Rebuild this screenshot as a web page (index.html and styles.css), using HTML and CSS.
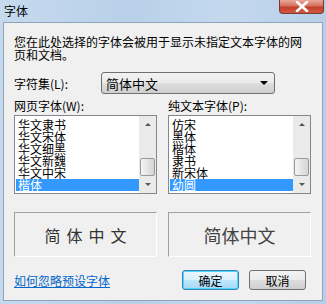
FILE: index.html
```html
<!DOCTYPE html>
<html>
<head>
  <title>字体</title>
  <link rel="stylesheet" href="styles.css">
</head>
<body>
  <div class="window">
    <div class="titlebar">
      <span class="title">字体</span>
      <span class="close">
        <svg width="14" height="11" viewBox="0 0 14 11"><path d="M2 1 L12 10 M12 1 L2 10" stroke="#fff" stroke-width="2.6" stroke-linecap="round"/></svg>
      </span>
    </div>

    <div class="client">
      <p class="intro">您在此处选择的字体会被用于显示未指定文本字体的网页和文档。</p>

      <div class="charset">
        <label>字符集(L):</label>
        <div class="select">
          <span>简体中文</span>
          <span class="arrow"></span>
        </div>
      </div>

      <div class="columns">
        <div class="col">
          <div class="col-label">网页字体(W):</div>
          <div class="listbox">
            <ul class="items">
              <li>华文隶书</li>
              <li>华文宋体</li>
              <li>华文细黑</li>
              <li>华文新魏</li>
              <li>华文中宋</li>
              <li class="selected">楷体</li>
            </ul>
            <div class="scrollbar">
              <span class="up"></span>
              <span class="track"><span class="thumb"></span></span>
              <span class="down"></span>
            </div>
          </div>
          <div class="preview serif">简体中文</div>
        </div>

        <div class="col">
          <div class="col-label">纯文本字体(P):</div>
          <div class="listbox">
            <ul class="items">
              <li>仿宋</li>
              <li>黑体</li>
              <li>楷体</li>
              <li>隶书</li>
              <li>新宋体</li>
              <li class="selected">幼圆</li>
            </ul>
            <div class="scrollbar">
              <span class="up"></span>
              <span class="track"><span class="thumb"></span></span>
              <span class="down"></span>
            </div>
          </div>
          <div class="preview sans">简体中文</div>
        </div>
      </div>

      <div class="footer">
        <a href="#" class="link">如何忽略预设字体</a>
        <div class="buttons">
          <button class="btn default">确定</button>
          <button class="btn">取消</button>
        </div>
      </div>
    </div>
  </div>
</body>
</html>
```

FILE: styles.css
```css
body {
  margin: 0;
  padding: 0;
  font-family: "Noto Sans CJK SC", sans-serif;
  font-size: 12px;
  color: #000;
  background-color: #bcd3ea;
}

.window {
  width: 326px;
  height: 304px;
  box-sizing: border-box;
  padding: 0 3px 3px 3px;
  background: linear-gradient(90deg, #c6daee 0%, #b8d0e8 40%, #c4d9ee 70%, #b6cee7 100%);
}

.titlebar {
  height: 22px;
  display: flex;
  justify-content: space-between;
  align-items: flex-start;
}

.title {
  margin-left: 1px;
  margin-top: 3px;
  font-size: 12px;
  line-height: 16px;
  color: #000;
}

.close {
  width: 45px;
  height: 14px;
  margin-right: -1px;
  box-sizing: border-box;
  display: flex;
  justify-content: center;
  align-items: center;
  border: 1px solid #7a3a30;
  border-top: none;
  border-radius: 0 0 4px 4px;
  background: linear-gradient(180deg, #e9a99b 0%, #d6705d 45%, #c0402b 55%, #d05a40 100%);
}

.client {
  height: 279px;
  box-sizing: border-box;
  padding: 12px 11px 0 10px;
  background-color: #f0f0f0;
  border: 1px solid #8fa3ba;
}

.intro {
  margin: 0;
  line-height: 13px;
  padding-right: 4px;
}

.charset {
  display: flex;
  align-items: center;
  margin-top: 11px;
}

.charset label {
  width: 87px;
}

.select {
  width: 174px;
  height: 22px;
  box-sizing: border-box;
  display: flex;
  justify-content: space-between;
  align-items: center;
  padding: 0 6px 0 4px;
  border: 1px solid #707070;
  border-radius: 3px;
  background: linear-gradient(180deg, #f2f2f2 0%, #ebebeb 50%, #dddddd 51%, #cfcfcf 100%);
  font-size: 13px;
}

.arrow {
  width: 0;
  height: 0;
  border-left: 4px solid transparent;
  border-right: 4px solid transparent;
  border-top: 4px solid #000;
}

.columns {
  display: flex;
  gap: 11px;
  margin-top: 4px;
}

.col {
  width: 143px;
}

.col-label {
  line-height: 16px;
}

.listbox {
  height: 79px;
  margin-top: 1px;
  box-sizing: border-box;
  display: flex;
  border: 1px solid #828790;
  background-color: #fff;
}

.items {
  flex: 1;
  list-style: none;
  margin: 0;
  padding: 3px 0 0 1px;
  overflow: hidden;
}

.items li {
  height: 12px;
  line-height: 12px;
  padding-left: 2px;
  font-size: 12px;
}

.items li.selected {
  background-color: #3399ff;
  color: #fff;
}

.scrollbar {
  width: 17px;
  display: flex;
  flex-direction: column;
  background-color: #eaeaea;
}

.scrollbar .up,
.scrollbar .down {
  height: 17px;
  display: flex;
  justify-content: center;
  align-items: center;
}

.scrollbar .up::after {
  content: "";
  border-left: 3px solid transparent;
  border-right: 3px solid transparent;
  border-bottom: 3px solid #555;
}

.scrollbar .down::after {
  content: "";
  border-left: 3px solid transparent;
  border-right: 3px solid transparent;
  border-top: 3px solid #555;
}

.scrollbar .track {
  flex: 1;
  display: flex;
  flex-direction: column;
  justify-content: flex-end;
}

.scrollbar .thumb {
  height: 16px;
  margin: 0 1px;
  border: 1px solid #9a9a9a;
  border-radius: 2px;
  background: linear-gradient(90deg, #f4f4f4 0%, #e4e4e4 50%, #d4d4d4 100%);
}

.preview {
  height: 45px;
  margin-top: 18px;
  box-sizing: border-box;
  display: flex;
  justify-content: center;
  align-items: center;
  border: 1px solid #a0a0a0;
  border-right-color: #fff;
  border-bottom-color: #fff;
}

.preview.serif {
  font-size: 16px;
  letter-spacing: 6px;
  padding-left: 6px;
  color: #333;
}

.preview.sans {
  font-size: 18px;
  color: #444;
}

.footer {
  display: flex;
  justify-content: space-between;
  align-items: center;
  margin-top: 13px;
}

.link {
  color: #0066cc;
  text-decoration: underline;
}

.buttons {
  display: flex;
  gap: 10px;
  margin-right: 5px;
}

.btn {
  width: 57px;
  height: 20px;
  padding: 0;
  font-family: "Noto Sans CJK SC", sans-serif;
  font-size: 12px;
  border: 1px solid #707070;
  border-radius: 3px;
  background: linear-gradient(180deg, #f2f2f2 0%, #ebebeb 50%, #dddddd 51%, #cfcfcf 100%);
}

.btn.default {
  border-color: #3c7fb1;
  background: linear-gradient(180deg, #eaf6fd 0%, #d9f0fc 50%, #bee6fd 51%, #a7d9f5 100%);
  box-shadow: inset 0 0 0 1px #48d8fb;
}
```
